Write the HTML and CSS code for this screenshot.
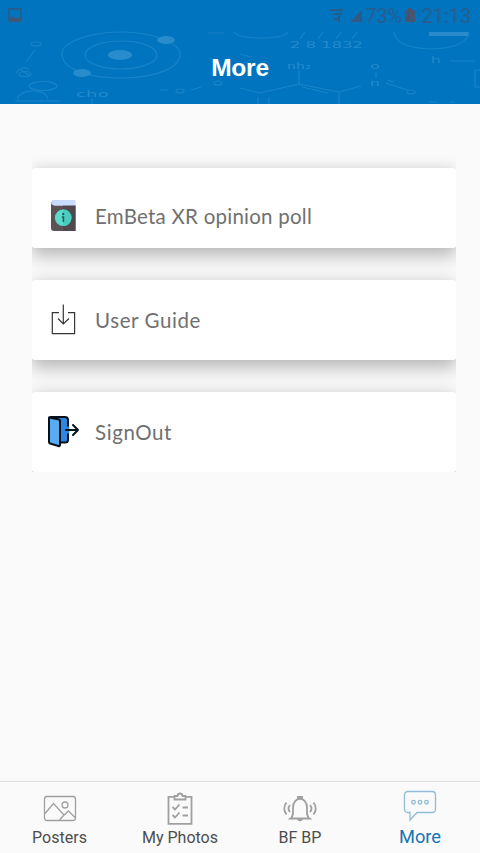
FILE: index.html
```
<!DOCTYPE html>
<html lang="en">
<head>
<meta charset="utf-8">
<meta name="viewport" content="width=device-width, initial-scale=1">
<title>More</title>
<link rel="stylesheet" href="styles.css">
</head>
<body>
<div class="app">
  <header class="header">
    <svg class="header-art" viewBox="0 0 480 104" aria-hidden="true">
      <g class="art-line">
        <path d="M88 36Q120 28 154 36Q180 44 180 54C180 69 153 78 121 78S62 69 62 54Q62 43 88 36"/>
        <ellipse cx="121" cy="55" rx="36" ry="14"/>
        <ellipse cx="36" cy="44" rx="5" ry="2"/><path d="M35 50l-9 12M16 73q8-9 13-3M20 69l10 7"/>
        <ellipse cx="25" cy="74" rx="6" ry="2.5"/>
        <ellipse cx="43" cy="86" rx="14" ry="4.500"/><path d="M17 99q3-8 16-8t15 8M15 101h45M92 99v5"/>
        <ellipse cx="180" cy="91" rx="4" ry="2"/><path d="M191 90l10-3M160 90h8"/>
        <ellipse cx="218" cy="83" rx="4" ry="2"/><path d="M208 33h16M234 32q4 6 27 6t27-6M240 54l12 3"/>
        <path d="M305 32l-5 7M323 32l-5 7M341 32l-5 7M357 32l-5 7"/>
        <path d="M240 88l20 5 39-9 40 8 22-6M299 84V70M302 87l26 6M339 93v11M258 97v7M269 97v7"/>
        <path d="M394 32q2 16 37 17 36-1 38-17M450 61h25M376 72v6M386 83l21 7M388 80l5 2M480 70h-5v17h5"/>
        <ellipse cx="411" cy="92" rx="4" ry="2"/>
        <path d="M429 102h8M450 102h5"/>
      </g>
      <g class="art-fill">
        <ellipse cx="120" cy="55" rx="12" ry="5"/><ellipse cx="166" cy="40" rx="9" ry="4"/><ellipse cx="82" cy="73" rx="9" ry="4"/><rect x="429" y="32" width="39" height="4"/>
      </g>
      <g class="art-text">
        <text x="76" y="97" textLength="33" lengthAdjust="spacingAndGlyphs">cho</text><text x="290" y="48" textLength="73" lengthAdjust="spacingAndGlyphs">2 8 1832</text><text x="287" y="69" textLength="24" lengthAdjust="spacingAndGlyphs">nh₂</text><text x="431" y="63" textLength="10" lengthAdjust="spacingAndGlyphs">h</text><text x="370" y="69" textLength="10" lengthAdjust="spacingAndGlyphs">o</text><text x="370" y="86" textLength="10" lengthAdjust="spacingAndGlyphs">n</text>
      </g>
    </svg>
    <div class="status">
      <svg width="14" height="18" viewBox="0 0 14 18" aria-hidden="true"><rect x="1" y="2" width="12" height="11" fill="none" stroke="#245f90" stroke-width="2"/><path d="M1 15v-3l4-3 3 3 2-2 3 2v3z" fill="#425775"/></svg>
      <div class="status-right">
        <svg width="34" height="16" viewBox="0 0 34 16" aria-hidden="true"><path d="M0 2h13M3 6h9M4 11h4M9 8v6" fill="none" stroke="#255c8b" stroke-width="2"/><path d="M20 14L32 2v12z" fill="#305a82"/></svg>
        <span class="percent">73%</span>
        <svg width="12" height="16" viewBox="0 0 12 16" aria-hidden="true"><path d="M4 0h4v2h3v12H1V2h3z" fill="#465571"/></svg>
        <span class="clock">21:13</span>
      </div>
    </div>
    <h1 class="title">More</h1>
  </header>
  <main class="content">
    <div class="list">
      <a class="card card-poll">
        <svg class="card-icon" viewBox="0 0 32 32" aria-hidden="true"><path d="M3 3q0-3 3-3h21v8H3z" fill="#c2d5fb"/><path d="M3 2q0 3.500 4 3.500h20.500V31H6q-3 0-3-3z" fill="#5b5256"/><path d="M15 5h12.500v26H15z" fill="#4f484c"/><path d="M6 .5h21.500v5H6z" fill="#cadcff"/><circle cx="15.200" cy="17.800" r="8.300" fill="#58dccb"/><path d="M15.200 9.500a8.300 8.300 0 0 1 0 16.600z" fill="#48cdbf"/><circle cx="15.200" cy="14" r="1.200" fill="#34575b"/><path d="M13.800 17h1.600v5" fill="none" stroke="#34575b" stroke-width="1.600"/></svg>
        <span class="label label-poll">EmBeta XR opinion poll</span>
      </a>
      <a class="card">
        <svg class="card-icon" viewBox="0 0 32 32" fill="none" stroke="#353535" stroke-width="1.200" aria-hidden="true"><path d="M11 8.700H4.300v21h22.300v-21H20M15.300.5v19M10 14.500l5.300 5.400 5.700-5.400"/></svg>
        <span class="label label-guide">User Guide</span>
      </a>
      <a class="card">
        <svg class="card-icon" viewBox="0 0 32 32" stroke="#07111b" stroke-width="2" stroke-linejoin="round" stroke-linecap="round" aria-hidden="true"><path d="M1.500 1.500Q1.500 1 3 1h14q3 0 3 3v20q0 2.500-3 2.500h-4" fill="#2f86dc"/><path d="M1 1.500l10 2q1 .3 1 1.500v24q0 1.500-1.500 1L2 27.500q-1-.3-1-1.500z" fill="#5aabf2"/><path d="M20 10.500v7" stroke="#2f86dc" stroke-width="2.600" stroke-linecap="butt"/><path d="M18 14h12M25 9l5 5-5 5" fill="none"/></svg>
        <span class="label label-out">SignOut</span>
      </a>
    </div>
  </main>
  <nav class="tabs">
    <a class="tab tab-posters">
      <svg class="tab-icon" viewBox="0 0 34 34" aria-hidden="true"><rect x="1.500" y="4.500" width="31" height="24" rx="2.500"/><circle cx="22" cy="13" r="3"/><path d="M2 21.500l8.500-10L21 23l-4.500 5M18 26l7.500-7 7 7"/></svg>
      <span>Posters</span>
    </a>
    <a class="tab tab-photos">
      <svg class="tab-icon" viewBox="0 0 34 34" aria-hidden="true"><path d="M11 4.800H5.500v27h23v-27H23M11.500 4h3q.3-2.500 2.500-2.500T19.500 4h3v3.500h-11zM9.500 15l2.500 2.500 4.500-5M9.500 23l2.500 2.500 4.500-5M19.500 15.500h5.500M19.500 23.500h5.500"/></svg>
      <span>My Photos</span>
    </a>
    <a class="tab tab-bell">
      <svg class="tab-icon" viewBox="0 0 34 34" aria-hidden="true"><path d="M7.500 26.500c3-2 2.500-5 2.500-11 0-11.500 14-11.500 14 0 0 6-.5 9 2.500 11zM15 6.500V5h4v1.500M14.500 27q2.500 3 5 0M7 13q-3 3.500 0 7M3.500 10.500q-4.500 6 0 12M27 13q3 3.500 0 7M30.500 10.500q4.500 6 0 12"/></svg>
      <span>BF BP</span>
    </a>
    <a class="tab tab-more">
      <svg class="tab-icon" viewBox="0 0 34 34" aria-hidden="true"><path d="M5 1.500h24q3.500 0 3.500 3.500v14q0 3.500-3.500 3.500H14L7 30v-7.500H5q-3.500 0-3.500-3.500V5q0-3.500 3.500-3.500z"/><circle cx="10.500" cy="12.200" r="1.800"/><circle cx="17" cy="12.200" r="1.800"/><circle cx="23.500" cy="12.200" r="1.800"/></svg>
      <span>More</span>
    </a>
  </nav>
</div>
</body>
</html>
```
FILE: styles.css
```
* { box-sizing: border-box; }
body { margin: 0; background: #fafafa; font-family: Roboto, sans-serif; }
.app { height: 853px; display: flex; flex-direction: column; overflow: hidden; }
.header { position: relative; height: 104px; flex: none; background: #0074bf; overflow: hidden; }
.header-art { position: absolute; inset: 0; width: 480px; height: 104px; }
.art-line { fill: none; stroke: #66b4e8; stroke-width: 1.2; opacity: .24; }
.art-fill { fill: #278bcc; }
.art-text { fill: #66b4e8; opacity: .34; font: 9px "DejaVu Sans", sans-serif; }
.status { position: relative; height: 32px; padding: 0 9px 0 8px; display: flex; align-items: center; justify-content: space-between; filter: blur(.7px); }
.status-right { display: flex; align-items: center; color: #275d8b; font-size: 20px; line-height: 32px; }
.percent { margin-left: 1px; width: 39px; letter-spacing: -.2px; }
.clock { margin-left: 5px; width: 50px; }
.title { position: relative; margin: 20px 0 0; color: #fff; font: bold 24.5px/32px "Liberation Sans", sans-serif; text-align: center; letter-spacing: -.2px; }
.content { flex: 1; padding: 48px 24px 0 32px; }
.list { display: flex; flex-direction: column; gap: 32px; padding-top: 16px; overflow: hidden; }
.card { height: 80px; display: flex; align-items: center; gap: 15px; padding-left: 16px; border-radius: 3px; background: #fff; box-shadow: 0 10px 18px rgba(0,0,0,.2), 0 0 16px rgba(0,0,0,.13); }
.card-poll { padding-top: 16px; }
.card-icon { width: 32px; height: 32px; flex: none; }
.label { font: 20.5px/28px Lato, sans-serif; color: #707070; white-space: nowrap; }
.label-poll { letter-spacing: .24px; }
.label-guide { letter-spacing: .6px; }
.label-out { letter-spacing: .6px; }
.tabs { flex: none; height: 72px; display: grid; grid-template-columns: repeat(4, 120px); border-top: 1px solid #dedede; background: #fafafa; }
.tab { display: flex; flex-direction: column; align-items: center; padding-top: 10px; color: #4d4d4d; font-size: 16px; line-height: 24px; }
.tab-icon { width: 34px; height: 34px; fill: none; stroke: #a0a0a0; stroke-width: 1.3; }
.tab-photos .tab-icon, .tab-bell .tab-icon { stroke-width: 1.8; }
.tab-posters span { margin-right: 1px; }
.tab-more { padding-top: 8px; color: #1474b3; font-size: 18.3px; line-height: 26px; }
.tab-more .tab-icon { stroke: #91bcd5; }
```
